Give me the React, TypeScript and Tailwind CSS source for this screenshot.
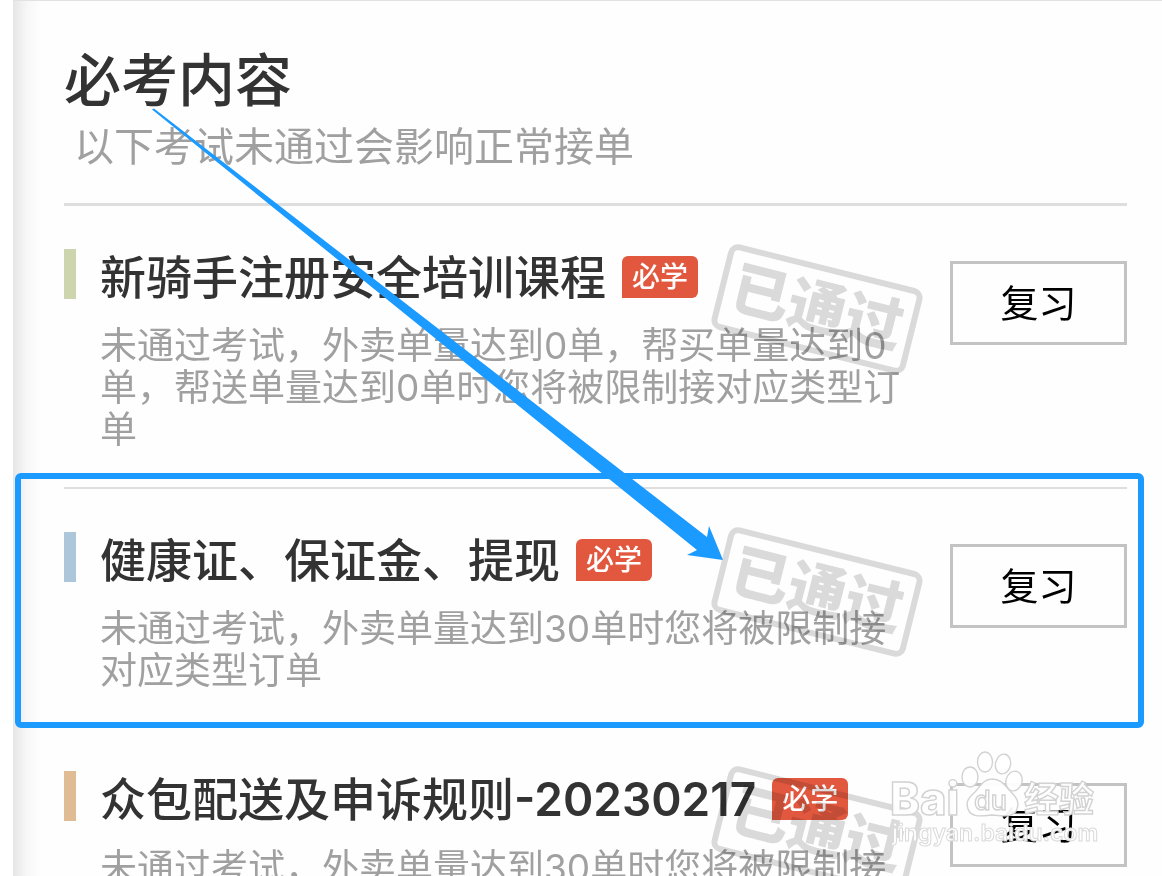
type Course = {
    id: number;
    title: string;
    version?: string;
    description: string;
    bar: string;
    divider?: boolean;
    highlighted?: boolean;
};

const courses: Course[] = [
    {
        id: 1,
        title: '新骑手注册安全培训课程',
        description: '未通过考试，外卖单量达到0单，帮买单量达到0单，帮送单量达到0单时您将被限制接对应类型订单',
        bar: 'bg-[#ccd5ae]',
        divider: true,
    },
    {
        id: 2,
        title: '健康证、保证金、提现',
        description: '未通过考试，外卖单量达到30单时您将被限制接对应类型订单',
        bar: 'bg-[#adc6d9]',
        highlighted: true,
    },
    {
        id: 3,
        title: '众包配送及申诉规则',
        version: '-20230217',
        description: '未通过考试，外卖单量达到30单时您将被限制接对应类型订单',
        bar: 'bg-[#dfbc94]',
    },
];

export default function App() {
    return (
        <div className="relative h-screen overflow-hidden bg-white pl-[13px] font-[Inter,'Noto_Sans_CJK_SC',sans-serif]">
            <main className="relative min-h-full border-t border-[#e2e2e2] bg-[linear-gradient(to_right,#e6e6e6,#f7f7f7_14px,#fefefe_28px)] pt-12 pr-[35px] pl-[51px]">
                <header className="border-b-[3px] border-[#dedede] pb-7">
                    <h1 className="text-[57px] leading-[64px] font-medium text-[#333]">必考内容</h1>
                    <p className="mt-[6px] pl-[10px] text-[40px] leading-[56px] font-normal text-[#a0a0a0]">以下考试未通过会影响正常接单</p>
                </header>

                <ul>
                    {courses.map(course => (
                        <CourseItem key={course.id} course={course} />
                    ))}
                </ul>
            </main>

            <Arrow />
            <Watermark />
        </div>
    );
}

function CourseItem({ course }: { course: Course }) {
    return (
        <li className={`relative flex items-start pt-[43px] pb-9 ${course.divider ? 'border-b-2 border-[#dedede]' : ''}`}>
            <span className={`h-[50px] w-[12px] shrink-0 ${course.bar}`} />

            <div className="ml-6 min-w-0 flex-1">
                <div className="flex items-center">
                    <h2 className="text-[46px] leading-[56px] font-medium whitespace-nowrap text-[#333]">
                        {course.title}
                        {course.version && <span className="font-semibold">{course.version}</span>}
                    </h2>
                    <span className="ml-4 w-[76px] rounded-[6px] rounded-bl-none bg-[#e2583e] text-center text-[28px] leading-[42px] font-medium text-white">
                        必学
                    </span>
                </div>
                <p className="mt-5 text-[37px] leading-[42px] font-normal text-[#a0a0a0]">{course.description}</p>
            </div>

            <button className="mt-3 ml-8 h-[84px] w-[177px] shrink-0 border-[3px] border-[#c3c3c3] text-[38px] text-black">
                复习
            </button>

            <span className="pointer-events-none absolute top-[59px] right-[210px] h-[88px] w-[200px] rotate-[14deg] rounded-[10px] border-[6px] border-[#dbdbdb] text-center text-[58px] leading-[72px] font-black text-[#dbdbdb] mix-blend-multiply">
                已通过
            </span>

            {course.highlighted && (
                <span className="pointer-events-none absolute -top-4 -right-[17px] -left-[49px] bottom-0 rounded-[6px] border-[6px] border-[#1b9aff]" />
            )}
        </li>
    );
}

function Arrow() {
    return (
        <svg className="pointer-events-none absolute top-0 left-0" width="740" height="580" viewBox="0 0 740 580" aria-hidden="true">
            <path d="M152 109.500L154 108.500L707 537L709 526L723 560L687 555L697 550Z" fill="#1b9aff" />
        </svg>
    );
}

function Watermark() {
    return (
        <svg className="pointer-events-none absolute right-[60px] bottom-[24px]" width="214" height="104" viewBox="0 0 214 104" aria-hidden="true">
            <g fill="#fff" fillOpacity="0.95" stroke="#d2d2d2" strokeWidth="1.4" fontFamily="Inter, 'Noto Sans CJK SC', sans-serif">
                <ellipse cx="82" cy="29" rx="8" ry="10" />
                <ellipse cx="97" cy="14" rx="7.500" ry="10" />
                <ellipse cx="115" cy="16" rx="7.500" ry="10" transform="rotate(12 115 16)" />
                <ellipse cx="126" cy="33" rx="8" ry="10" transform="rotate(15 126 33)" />
                <path d="M104 31c-9 0-12 8-17 13c-8 7-9 11-7 17c3 9 14 7 24 6c11 1 22 3 25-6c2-6 1-10-6-17c-6-6-9-13-19-13z" />
                <text x="2" y="67" fontSize="45" fontWeight="800">Bai</text>
                <text x="86" y="62" fontSize="27" fontWeight="500">du</text>
                <text x="136" y="64" fontSize="35" fontWeight="700">经验</text>
                <text x="4" y="93" fontSize="23" fontWeight="600" stroke="#dadada" strokeWidth="1">jingyan.baidu.com</text>
            </g>
        </svg>
    );
}
